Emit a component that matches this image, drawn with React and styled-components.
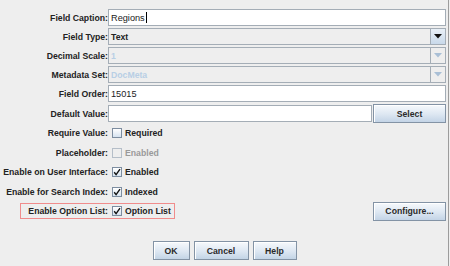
import React from "react";
import styled, { createGlobalStyle } from "styled-components";

const GlobalStyle = createGlobalStyle`
  body {
    margin: 0;
    background: #eeeeee;
    font-family: "Liberation Sans", Arial, sans-serif;
  }
`;

const Panel = styled.div`
  box-sizing: border-box;
  width: 449px;
  height: 266px;
  padding: 9px 2px 0 0;
  border-right: 1px solid #9c9c9c;
  background: #eeeeee;
`;

const Row = styled.div`
  display: flex;
  align-items: center;
  height: ${(p) => p.h || 17}px;
  margin-bottom: ${(p) => (p.mb === undefined ? 2 : p.mb)}px;
`;

const Label = styled.div`
  flex: none;
  width: ${(p) => p.w || 108}px;
  text-align: right;
  font-size: 8.7px;
  font-weight: bold;
  color: #222;
  white-space: nowrap;
`;

const TextField = styled.div`
  flex: 1;
  box-sizing: border-box;
  height: 17px;
  display: flex;
  align-items: center;
  padding-left: 2px;
  border: 1px solid #a4adb6;
  background: #fff;
  font-size: 9.2px;
  color: #222;
`;

const Caret = styled.span`
  display: inline-block;
  width: 1px;
  height: 11px;
  margin-left: 1px;
  background: #000;
`;

const Combo = styled.div`
  flex: 1;
  box-sizing: border-box;
  height: 17px;
  display: flex;
  border: 1px solid #a4adb6;
  background: #eeeeee;
`;

const ComboText = styled.div`
  flex: 1;
  display: flex;
  align-items: center;
  padding-left: 2px;
  font-size: 8.7px;
  font-weight: bold;
  color: ${(p) => (p.disabled ? "#b8cfe5" : "#222")};
`;

const ArrowButton = styled.div`
  flex: none;
  width: 14px;
  display: flex;
  align-items: center;
  justify-content: center;
  border-left: 1px solid #a4adb6;
  background: ${(p) =>
    p.disabled ? "#eeeeee" : "linear-gradient(#e9f0f7, #c9d9ea)"};
`;

const Button = styled.div`
  flex: none;
  box-sizing: border-box;
  width: ${(p) => p.w}px;
  height: ${(p) => p.h || 19}px;
  display: flex;
  align-items: center;
  justify-content: center;
  margin-left: ${(p) => (p.push ? "auto" : `${p.ml || 0}px`)};
  border: 1px solid #8393a5;
  background: linear-gradient(#f6f9fc, #dde7f2 55%, #c3d4e6);
  box-shadow: inset 1px 1px 0 #fff;
  font-size: 8.7px;
  font-weight: bold;
  color: #2a2a2a;
  white-space: nowrap;
`;

const CheckWrap = styled.div`
  display: flex;
  align-items: center;
  gap: 3px;
  margin-left: 4px;
  font-size: 8.7px;
  font-weight: bold;
  white-space: nowrap;
  color: ${(p) => (p.disabled ? "#9a9a9a" : "#222")};
`;

const Box = styled.div`
  box-sizing: border-box;
  width: 10px;
  height: 10px;
  display: flex;
  align-items: center;
  justify-content: center;
  border: 1px solid ${(p) => (p.disabled ? "#b5bec8" : "#7d8da0")};
  background: ${(p) =>
    p.disabled ? "#eeeeee" : "linear-gradient(#ffffff, #d6e3f0)"};
`;

const Highlight = styled.div`
  flex: none;
  display: flex;
  align-items: center;
  box-sizing: border-box;
  height: 16px;
  margin-left: 20px;
  padding-right: 3px;
  border: 1px solid #f08c8c;
`;

const ButtonBar = styled.div`
  display: flex;
  justify-content: center;
  gap: 4px;
  margin-top: 20px;
  padding-left: 3px;
`;

const Triangle = ({ color }) => (
  <svg width="8" height="5" viewBox="0 0 8 5">
    <path d="M0 0 H8 L4 4.5 Z" fill={color} />
  </svg>
);

const Check = () => (
  <svg width="8" height="8" viewBox="0 0 8 8">
    <path d="M1.2 4.2 L3.1 6.6 L7 1.2" fill="none" stroke="#111" strokeWidth="1.4" />
  </svg>
);

const CheckBox = ({ checked, disabled, text }) => (
  <CheckWrap disabled={disabled}>
    <Box disabled={disabled}>{checked && <Check />}</Box>
    {text}
  </CheckWrap>
);

const ComboBox = ({ value, disabled }) => (
  <Combo>
    <ComboText disabled={disabled}>{value}</ComboText>
    <ArrowButton disabled={disabled}>
      <Triangle color={disabled ? "#a9bfd6" : "#111"} />
    </ArrowButton>
  </Combo>
);

export default function App() {
  return (
    <Panel>
      <GlobalStyle />
      <Row>
        <Label>Field Caption:</Label>
        <TextField>
          Regions
          <Caret />
        </TextField>
      </Row>
      <Row>
        <Label>Field Type:</Label>
        <ComboBox value="Text" />
      </Row>
      <Row>
        <Label>Decimal Scale:</Label>
        <ComboBox value="1" disabled />
      </Row>
      <Row>
        <Label>Metadata Set:</Label>
        <ComboBox value="DocMeta" disabled />
      </Row>
      <Row>
        <Label>Field Order:</Label>
        <TextField>15015</TextField>
      </Row>
      <Row h={19} mb={0.5}>
        <Label>Default Value:</Label>
        <TextField />
        <Button w={73} h={19} ml={1}>
          Select
        </Button>
      </Row>
      <Row h={19.5} mb={0}>
        <Label>Require Value:</Label>
        <CheckBox text="Required" />
      </Row>
      <Row h={19.5} mb={0}>
        <Label>Placeholder:</Label>
        <CheckBox text="Enabled" disabled />
      </Row>
      <Row h={19.5} mb={0}>
        <Label>Enable on User Interface:</Label>
        <CheckBox text="Enabled" checked />
      </Row>
      <Row h={19.5} mb={0}>
        <Label>Enable for Search Index:</Label>
        <CheckBox text="Indexed" checked />
      </Row>
      <Row h={19.5} mb={0}>
        <Highlight>
          <Label w={87}>Enable Option List:</Label>
          <CheckBox text="Option List" checked />
        </Highlight>
        <Button w={73} push>
          Configure...
        </Button>
      </Row>
      <ButtonBar>
        <Button w={37}>OK</Button>
        <Button w={55}>Cancel</Button>
        <Button w={44}>Help</Button>
      </ButtonBar>
    </Panel>
  );
}
